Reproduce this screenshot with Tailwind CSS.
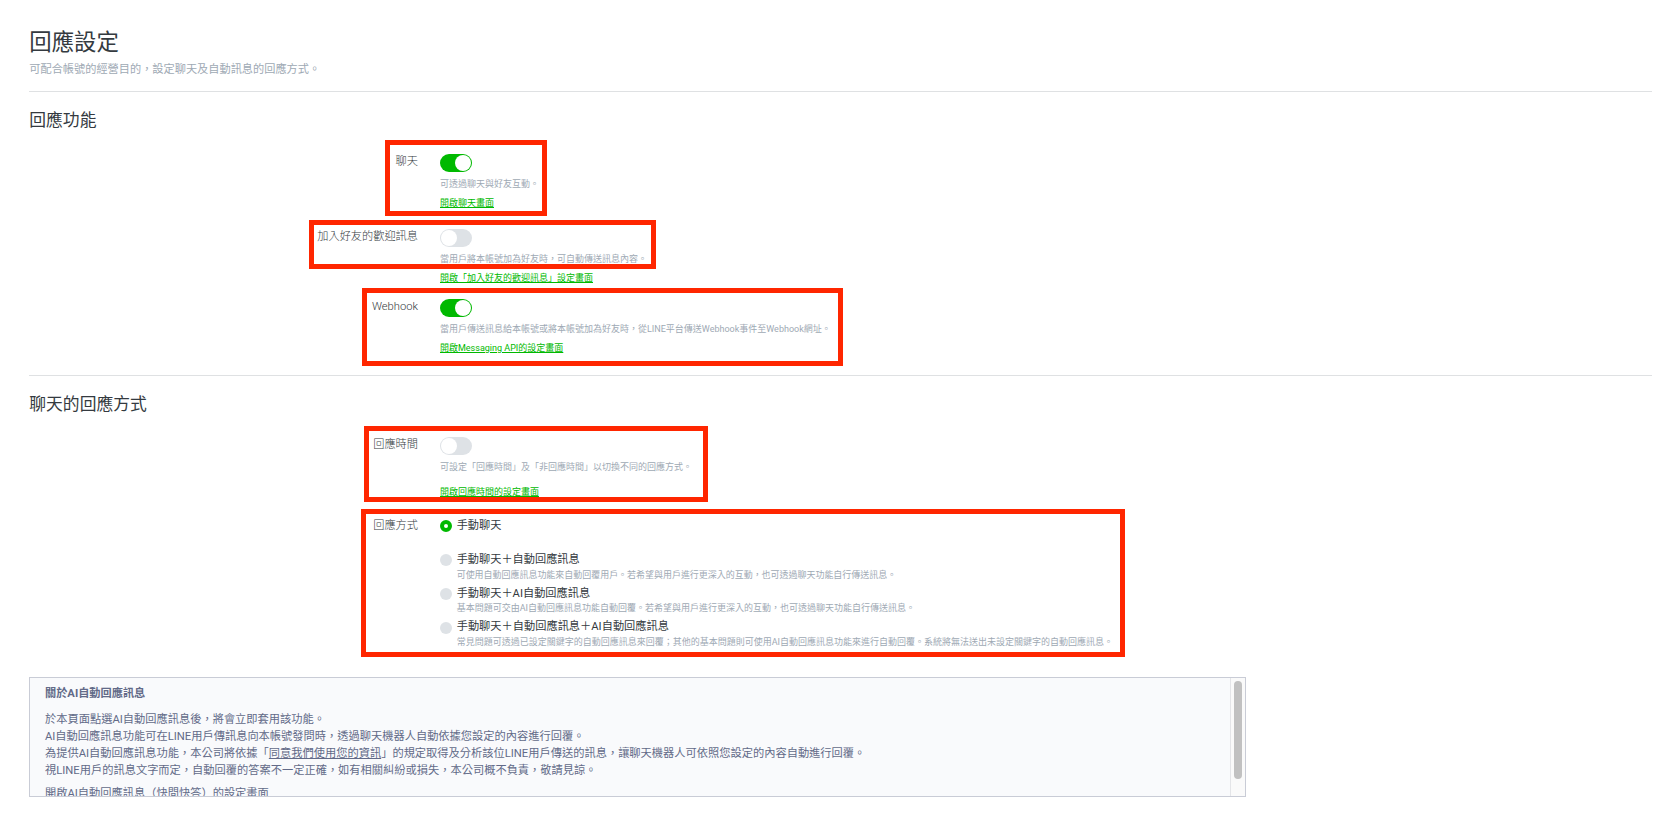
<!DOCTYPE html>
<html lang="zh-Hant">
<head>
<meta charset="utf-8">
<title>回應設定</title>
<script src="https://cdn.jsdelivr.net/npm/@tailwindcss/browser@4"></script>
</head>
<body class="relative h-[836px] w-[1674px] overflow-hidden bg-white font-['Roboto','Noto_Sans_CJK_TC',sans-serif] text-[11.2px] text-[#343a40]">
<main class="flex flex-col pl-[29.3px] pr-[22px]">
  <header class="flex h-[92px] flex-col border-b border-[#dfe1e3] pt-[26px] whitespace-nowrap">
    <h1 class="h-8 text-[22.4px] leading-8">回應設定</h1>
    <p class="mt-0.5 h-5 leading-5 text-[#9ea9b4]">可配合帳號的經營目的，設定聊天及自動訊息的回應方式。</p>
  </header>

  <section class="h-[284px] border-b border-[#dfe1e3] pt-[16px] whitespace-nowrap">
    <h2 class="h-6 text-[16.8px] leading-6">回應功能</h2>
    <div class="mt-[20px] flex h-[75px] gap-[22px]">
      <div class="h-5 w-[388.7px] text-right font-light leading-5">聊天</div>
      <div class="flex flex-col pt-[2px] text-[9px]">
        <div class="flex h-[18px] w-8 justify-end rounded-full bg-[#00b900] p-px"><span class="size-4 rounded-full bg-white"></span></div>
        <p class="mt-[4px] h-4 leading-4 text-[#9ea9b4]">可透過聊天與好友互動。</p>
        <a class="mt-[3px] h-4 leading-4 text-[#00b900] underline">開啟聊天畫面</a>
      </div>
    </div>
    <div class="flex h-[70px] gap-[22px]">
      <div class="h-5 w-[388.7px] text-right font-light leading-5">加入好友的歡迎訊息</div>
      <div class="flex flex-col pt-[2px] text-[9px]">
        <div class="flex h-[18px] w-8 rounded-full bg-[#dee2e6] p-px"><span class="size-4 rounded-full bg-white"></span></div>
        <p class="mt-[4px] h-4 leading-4 text-[#9ea9b4]">當用戶將本帳號加為好友時，可自動傳送訊息內容。</p>
        <a class="mt-[3px] h-4 leading-4 text-[#00b900] underline">開啟「加入好友的歡迎訊息」設定畫面</a>
      </div>
    </div>
    <div class="flex h-[70px] gap-[22px]">
      <div class="h-5 w-[388.7px] text-right font-light leading-5">Webhook</div>
      <div class="flex flex-col pt-[2px] text-[9px]">
        <div class="flex h-[18px] w-8 justify-end rounded-full bg-[#00b900] p-px"><span class="size-4 rounded-full bg-white"></span></div>
        <p class="mt-[4px] h-4 leading-4 text-[#9ea9b4]">當用戶傳送訊息給本帳號或將本帳號加為好友時，從LINE平台傳送Webhook事件至Webhook網址。</p>
        <a class="mt-[3px] h-4 leading-4 text-[#00b900] underline">開啟Messaging API的設定畫面</a>
      </div>
    </div>
  </section>

  <section class="h-[301px] pt-[16px] whitespace-nowrap">
    <h2 class="h-6 text-[16.8px] leading-6">聊天的回應方式</h2>
    <div class="mt-[19px] flex h-[81px] gap-[22px]">
      <div class="h-5 w-[388.7px] text-right font-light leading-5">回應時間</div>
      <div class="flex flex-col pt-[2px] text-[9px]">
        <div class="flex h-[18px] w-8 rounded-full bg-[#dee2e6] p-px"><span class="size-4 rounded-full bg-white"></span></div>
        <p class="mt-[4px] h-4 leading-4 text-[#9ea9b4]">可設定「回應時間」及「非回應時間」以切換不同的回應方式。</p>
        <a class="mt-[9px] h-4 leading-4 text-[#00b900] underline">開啟回應時間的設定畫面</a>
      </div>
    </div>
    <div class="flex gap-[22px]">
      <div class="h-5 w-[388.7px] text-right font-light leading-5">回應方式</div>
      <div class="flex flex-col">
        <div class="flex h-[34px] gap-[4.7px]">
          <span class="mt-[4px] size-3 rounded-full border-4 border-[#00b900] bg-white"></span>
          <div class="leading-5">手動聊天</div>
        </div>
        <div class="flex h-[34px] gap-[4.7px]">
          <span class="mt-[4px] size-3 rounded-full bg-[#dee2e6]"></span>
          <div><div class="h-5 leading-5">手動聊天＋自動回應訊息</div><p class="-mt-[3px] h-4 text-[8.98px] leading-4 text-[#9ea9b4]">可使用自動回應訊息功能來自動回覆用戶。若希望與用戶進行更深入的互動，也可透過聊天功能自行傳送訊息。</p></div>
        </div>
        <div class="flex h-[34px] gap-[4.7px]">
          <span class="mt-[4px] size-3 rounded-full bg-[#dee2e6]"></span>
          <div><div class="h-5 leading-5">手動聊天＋AI自動回應訊息</div><p class="-mt-[4px] h-4 text-[9px] leading-4 text-[#9ea9b4]">基本問題可交由AI自動回應訊息功能自動回覆。若希望與用戶進行更深入的互動，也可透過聊天功能自行傳送訊息。</p></div>
        </div>
        <div class="flex h-[34px] gap-[4.7px]">
          <span class="mt-[4px] size-3 rounded-full bg-[#dee2e6]"></span>
          <div class="-mt-px"><div class="h-5 text-[11.23px] leading-5">手動聊天＋自動回應訊息＋AI自動回應訊息</div><p class="-mt-[3px] h-4 text-[9px] leading-4 text-[#9ea9b4]">常見問題可透過已設定關鍵字的自動回應訊息來回覆；其他的基本問題則可使用AI自動回應訊息功能來進行自動回覆。系統將無法送出未設定關鍵字的自動回應訊息。</p></div>
        </div>
      </div>
    </div>
  </section>

  <section class="flex h-[120px] w-[1216.7px] overflow-hidden border border-[#c9ccd6] bg-[#f9fafc] whitespace-nowrap text-[#626a88]">
    <div class="flex-1 pl-[14.7px] pt-[7px] text-[11.24px] leading-[17px]">
      <h3 class="text-[11.2px] font-bold">關於AI自動回應訊息</h3>
      <p class="mt-[9px]">於本頁面點選AI自動回應訊息後，將會立即套用該功能。<br>AI自動回應訊息功能可在LINE用戶傳訊息向本帳號發問時，透過聊天機器人自動依據您設定的內容進行回覆。<br>為提供AI自動回應訊息功能，本公司將依據「<a class="underline">同意我們使用您的資訊</a>」的規定取得及分析該位LINE用戶傳送的訊息，讓聊天機器人可依照您設定的內容自動進行回覆。<br>視LINE用戶的訊息文字而定，自動回覆的答案不一定正確，如有相關糾紛或損失，本公司概不負責，敬請見諒。</p>
      <p class="mt-[6px]">開啟AI自動回應訊息（快問快答）的設定畫面</p>
    </div>
    <div class="w-[15px] border-l border-[#e4e5e8] bg-[#fafafa] pl-[3px] pt-[3px]"><div class="h-[98px] w-2 rounded-full bg-[#c1c1c1]"></div></div>
  </section>
</main>

<div class="absolute left-[385px] top-[140px] h-[76px] w-[162px] border-5 border-[#ff2600]"></div>
<div class="absolute left-[309px] top-[220px] h-[49px] w-[347px] border-5 border-[#ff2600]"></div>
<div class="absolute left-[362px] top-[288px] h-[78px] w-[481px] border-5 border-[#ff2600]"></div>
<div class="absolute left-[364px] top-[426px] h-[76px] w-[344px] border-5 border-[#ff2600]"></div>
<div class="absolute left-[361px] top-[509px] h-[148px] w-[764px] border-5 border-[#ff2600]"></div>
</body>
</html>
